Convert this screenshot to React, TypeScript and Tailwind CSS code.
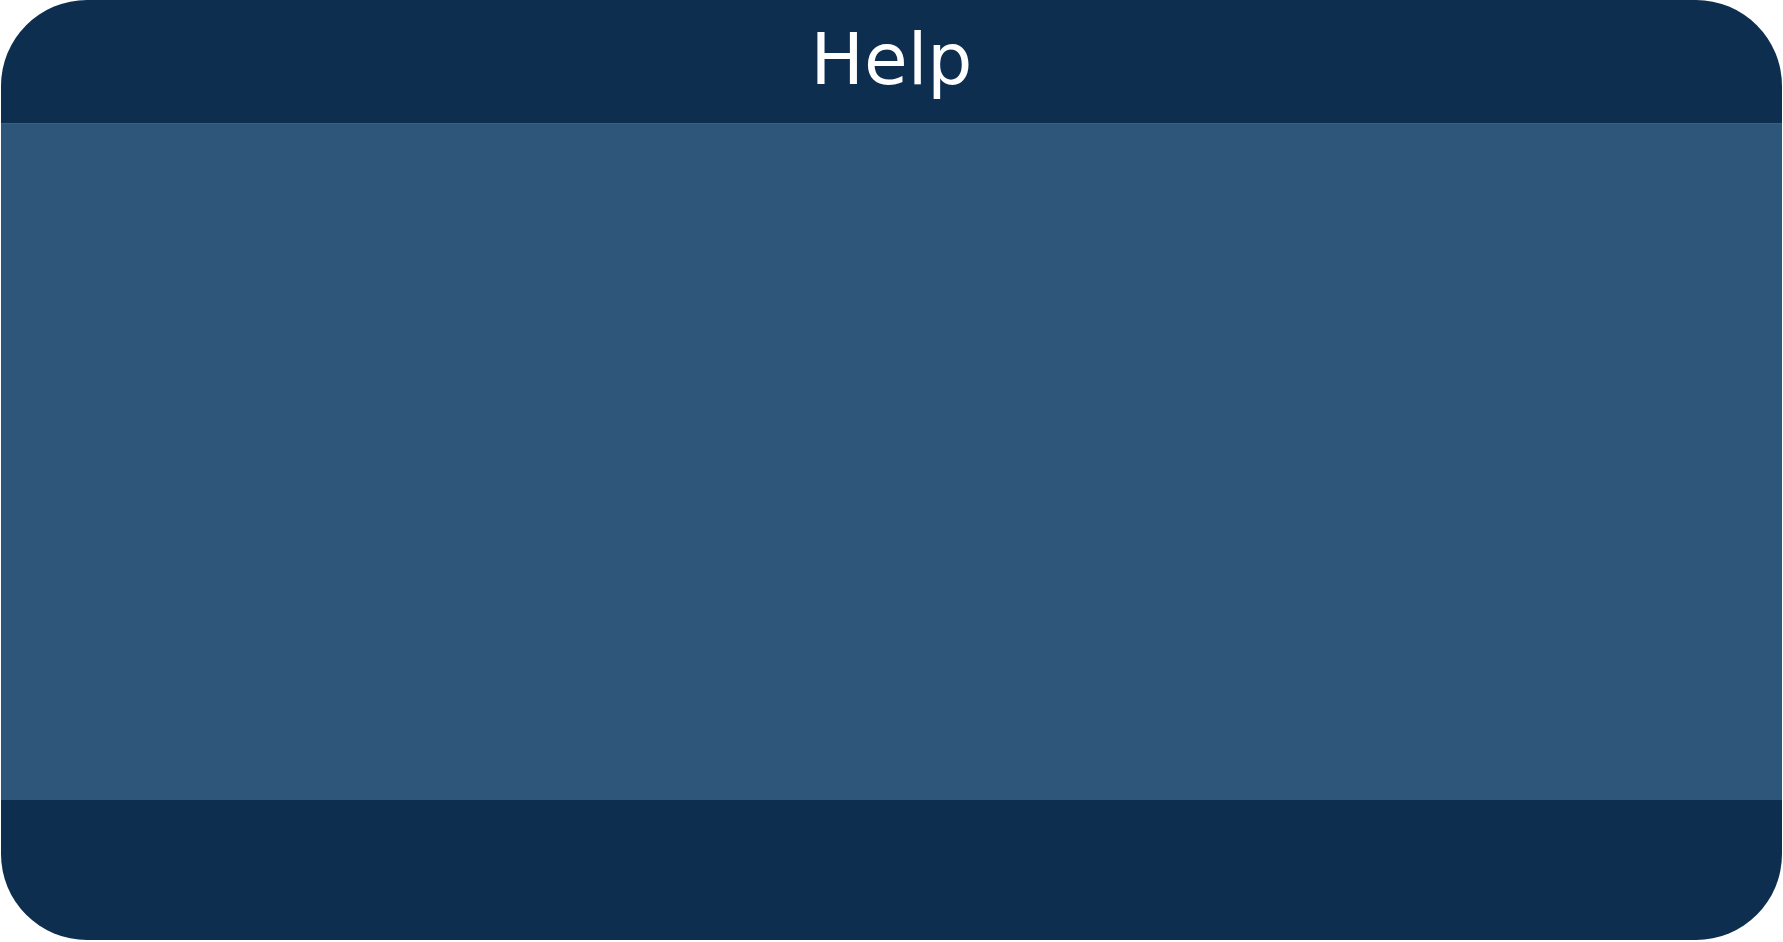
export default function App() {
  return (
    <div className="w-[1783px] h-[942px] bg-white pl-px">
      <div className="w-[1781px] h-[940px] rounded-[86px] overflow-hidden bg-[#0d2e4f] flex flex-col">
        <div className="h-[123px] shrink-0 flex justify-center pt-[24px]">
          <h1 className="text-[71px] leading-none text-white font-['DejaVu_Sans',sans-serif]">Help</h1>
        </div>
        <div className="h-[677px] shrink-0 bg-[#2e567a] border-t border-[#3a5f80]"></div>
        <div className="flex-1"></div>
      </div>
    </div>
  );
}
